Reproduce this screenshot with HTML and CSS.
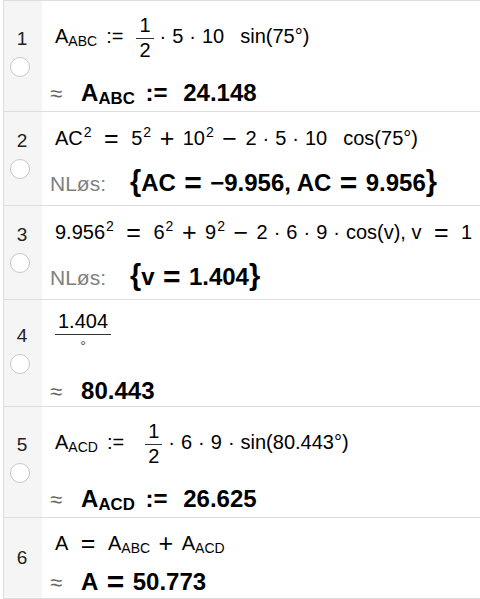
FILE: index.html
```html
<!DOCTYPE html>
<html>
<head>
  <meta charset="UTF-8">
  <meta name="viewport" content="width=device-width, initial-scale=1.0">
  <title>CAS</title>
  <link rel="stylesheet" href="styles.css">
</head>
<body>
  <div class="cas">
    <div class="cell cell-frac">
      <div class="gutter"><span class="num">1</span><span class="dot"></span></div>
      <div class="body">
        <div class="input">A<sub>ABC</sub><span class="def">:=</span><span class="frac"><span class="top">1</span><span class="bot">2</span></span><span class="mul">·</span>5<span class="mul">·</span>10<span class="fn">sin(75°)</span></div>
        <div class="output"><span class="approx">≈</span>A<sub>ABC</sub><span class="def">:=</span>24.148</div>
      </div>
    </div>

    <div class="cell">
      <div class="gutter"><span class="num">2</span><span class="dot"></span></div>
      <div class="body">
        <div class="input">AC<sup>2</sup><span class="eq">=</span>5<sup>2</sup><span class="op">+</span>10<sup>2</sup><span class="op">−</span>2<span class="mul">·</span>5<span class="mul">·</span>10<span class="fn">cos(75°)</span></div>
        <div class="output"><span class="label">NLøs:</span><span class="brace">{</span>AC<span class="eq">=</span>−9.956, AC<span class="eq">=</span>9.956<span class="brace">}</span></div>
      </div>
    </div>

    <div class="cell">
      <div class="gutter"><span class="num">3</span><span class="dot"></span></div>
      <div class="body">
        <div class="input">9.956<sup>2</sup><span class="eq">=</span>6<sup>2</sup><span class="op">+</span>9<sup>2</sup><span class="op">−</span>2<span class="mul">·</span>6<span class="mul">·</span>9<span class="mul">·</span>cos(v), v<span class="eq">=</span>1</div>
        <div class="output"><span class="label">NLøs:</span><span class="brace">{</span>v<span class="eq">=</span>1.404<span class="brace">}</span></div>
      </div>
    </div>

    <div class="cell cell-short">
      <div class="gutter"><span class="num">4</span><span class="dot"></span></div>
      <div class="body">
        <div class="input"><span class="frac"><span class="top">1.404</span><span class="bot deg">°</span></span></div>
        <div class="output"><span class="approx">≈</span>80.443</div>
      </div>
    </div>

    <div class="cell cell-frac">
      <div class="gutter"><span class="num">5</span><span class="dot"></span></div>
      <div class="body">
        <div class="input">A<sub>ACD</sub><span class="def wide">:=</span><span class="frac"><span class="top">1</span><span class="bot">2</span></span><span class="mul">·</span>6<span class="mul">·</span>9<span class="mul">·</span>sin(80.443°)</div>
        <div class="output"><span class="approx">≈</span>A<sub>ACD</sub><span class="def">:=</span>26.625</div>
      </div>
    </div>

    <div class="cell cell-last">
      <div class="gutter"><span class="num">6</span></div>
      <div class="body">
        <div class="input">A<span class="eq">=</span>A<sub>ABC</sub><span class="op">+</span>A<sub>ACD</sub></div>
        <div class="output"><span class="approx">≈</span>A<span class="eq">=</span>50.773</div>
      </div>
    </div>
  </div>
</body>
</html>
```

FILE: styles.css
```css
body {
  margin: 0;
  background: #fff;
  font-family: "Liberation Sans", Arial, sans-serif;
  color: #000;
}
.cas {
  margin-left: 3px;
  border-left: 1px solid #ddd;
  border-top: 1px solid #ddd;
}
.cell {
  display: flex;
  border-bottom: 1px solid #ddd;
}
.gutter {
  width: 38px;
  flex: none;
  background: #f5f5f5;
  display: flex;
  flex-direction: column;
  align-items: center;
  justify-content: center;
  padding-bottom: 7px;
}
.num {
  font-size: 19px;
  line-height: 20px;
  color: #222;
  margin-right: 2px;
}
.dot {
  width: 18px;
  height: 18px;
  border: 1.5px solid #c8c8c8;
  border-radius: 50%;
  background: #fff;
  margin-top: 8px;
  margin-right: 7px;
}
.body {
  flex: 1;
  min-width: 0;
  overflow: hidden;
  white-space: nowrap;
  display: flex;
  flex-direction: column;
  gap: 18px;
  padding: 12px 0 8px 8px;
}
.input {
  font-size: 20px;
  line-height: 28px;
  padding-left: 5px;
}
.output {
  font-size: 24px;
  line-height: 26px;
  font-weight: bold;
}
sub {
  font-size: 0.7em;
  line-height: 0;
  vertical-align: -0.2em;
}
sup {
  font-size: 0.7em;
  line-height: 0;
  vertical-align: 0.6em;
  margin-left: 1px;
}
.eq,
.op {
  font-size: 1.25em;
  line-height: 0;
  vertical-align: -0.06em;
}
.eq {
  margin: 0 0.5em;
}
.op {
  margin: 0 0.34em;
}
.mul {
  margin: 0 0.3em;
}
.def {
  margin: 0 0.65em 0 0.45em;
}
.def.wide {
  margin-right: 1.05em;
}
.fn {
  margin-left: 0.8em;
}
.output .eq {
  margin: 0 0.28em;
}
.approx {
  font-weight: normal;
  font-size: 22px;
  line-height: 28px;
  color: #666;
  margin-right: 19px;
}
.label {
  font-weight: normal;
  font-size: 21px;
  color: #808080;
  margin-right: 24px;
}
.brace {
  font-size: 1.2em;
  line-height: 0;
}
.frac {
  display: inline-flex;
  flex-direction: column;
  align-items: center;
  vertical-align: middle;
  line-height: 19px;
}
.frac .top {
  padding: 0 3px 3px;
  border-bottom: 1px solid #333;
  align-self: stretch;
  text-align: center;
}
.frac .bot {
  padding-top: 2px;
}
.frac .deg {
  font-size: 14px;
  color: #444;
}
.cell-frac .body {
  padding: 15px 0 3px 8px;
  gap: 20px;
}
.cell-short .body {
  padding: 12px 0 0 8px;
  gap: 22px;
}
.cell-last .gutter {
  padding-bottom: 0;
}
.cell-last .body {
  padding: 11px 0 1px 8px;
  gap: 12px;
}
```
